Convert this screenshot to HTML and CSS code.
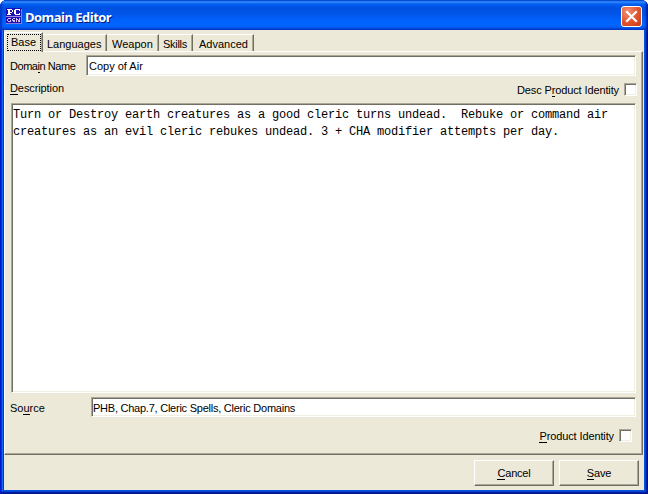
FILE: index.html
```html
<!DOCTYPE html>
<html lang="en">
<head>
<meta charset="utf-8">
<title>Domain Editor</title>
<link rel="stylesheet" href="styles.css">
</head>
<body>
<div class="window">
  <header class="titlebar">
    <svg class="app-icon" viewBox="0 0 16 16" shape-rendering="crispEdges">
      <rect width="16" height="16" fill="#1c12b4"/>
      <path d="M0 15.500H15.500V1" fill="none" stroke="#8c7ad8"/>
      <path d="M1 1.500H6M2 1V7M3 1V7M6.500 2V4M3 4.500H6M1 6.500H5M9 1.500H14M13.500 1V3M8.500 2V6M9.500 2V6M9 6.500H14M13.500 5V6" fill="none" stroke="#fff"/>
      <path d="M0 8.500H15" stroke="#a48be8"/>
      <path d="M2 10.500H5M1.500 11V13M2 13.500H5M4.500 12V13M7 10.500H9M6.500 11V13M7 12.500H9M7 13.500H9M10.500 10V14M11.500 11V12M12.500 12V14M13.500 10V14" fill="none" stroke="#d9bdf5"/>
    </svg>
    <h1 class="title">Domain Editor</h1>
    <button class="close" aria-label="Close">
      <svg viewBox="0 0 19 19"><path d="M5 5L14 14M14 5L5 14" stroke="#fff" stroke-width="2.200" stroke-linecap="square"/></svg>
    </button>
  </header>
  <main class="content">
    <nav class="tabs">
      <span class="tab active"><span class="focus">Base</span></span>
      <span class="tab languages">Languages</span>
      <span class="tab weapon">Weapon</span>
      <span class="tab skills">Skills</span>
      <span class="tab advanced">Advanced</span>
    </nav>
    <section class="panel">
      <div class="row name-row"><label>Doma<i class="key">i</i>n Name</label><div class="field">Copy of Air</div></div>
      <div class="row desc-row"><label><i class="key">D</i>escription</label><span class="check-label">Desc P<i class="key">r</i>oduct Identity</span><span class="checkbox"></span></div>
      <div class="field description">Turn or Destroy earth creatures as a good cleric turns undead.  Rebuke or command air
creatures as an evil cleric rebukes undead. 3 + CHA modifier attempts per day.</div>
      <div class="row source-row"><label>So<i class="key">u</i>rce</label><div class="field">PHB, Chap.7, Cleric Spells, Cleric Domains</div></div>
      <div class="row identity-row"><span class="check-label"><i class="key">P</i>roduct Identity</span><span class="checkbox"></span></div>
    </section>
    <footer class="actions">
      <button class="button"><span><i class="key">C</i>ancel</span></button>
      <button class="button"><span><i class="key">S</i>ave</span></button>
    </footer>
  </main>
</div>
</body>
</html>
```
FILE: styles.css
```css
* { box-sizing: border-box; }
body { margin: 0; background: #fff; font: 11px/13px "Liberation Sans", Arial, sans-serif; color: #000; }
.window {
  width: 648px; height: 494px; padding: 0 4px 4px; display: flex; flex-direction: column;
  border-radius: 7px 7px 0 0; background: #0831d9; overflow: hidden;
  box-shadow: inset 1px 0 #0019cf, inset -1px -1px #00138c, inset -2px -2px #001ea0, inset 2px 0 #0831d9, inset -3px -3px #0441d8, inset 3px 0 #166aee, inset -4px -4px #0855dd;
}
.titlebar {
  flex: none; height: 30px; margin: 0 -4px; padding: 2px 6px 0; display: flex; align-items: center;
  background: linear-gradient(#0058e6 0, #3c94ff 2px, #1370f5 3px, #0058ee 5px, #0050e0 8px, #0055e8 14px, #0061fc 20px, #0066ff 25px, #005cf5 27px, #0048d8 29px, #003dd7 30px);
  box-shadow: inset 2px 0 2px #0037c8, inset -2px 0 2px #001e9c;
}
.app-icon { width: 16px; height: 16px; }
.title { flex: 1; margin: 1px 0 0 3px; font: bold 13px/18px "Open Sans", "Liberation Sans", sans-serif; letter-spacing: -0.55px; color: #fff; text-shadow: 1px 1px #0a1883; }
.close {
  width: 21px; height: 21px; padding: 0; border: 1px solid #fff; border-radius: 3px;
  background: radial-gradient(circle at 30% 25%, #ee9075, #e1532c 55%, #c73a12);
}
.close svg { display: block; width: 19px; height: 19px; }
.content { flex: 1; display: flex; flex-direction: column; background: #ece9d8; }
.tabs { height: 21px; display: flex; align-items: flex-end; }
.tab {
  height: 17px; padding: 3px 0 0 5px; white-space: nowrap; border: solid;
  border-width: 1px 1px 0 0; border-color: #fff #716f64 #fff #fff;
  box-shadow: inset -1px 0 #aca899; border-top-left-radius: 2px;
}
.active {
  position: relative; z-index: 1; width: 39px; height: 20px; padding: 1px 0 0 2px; margin: 0 -1px -1px 0;
  background: #ece9d8; border-left-width: 1px;
}
.focus { display: block; width: 34px; height: 17px; padding: 1px 0 0 3px; border: 1px dotted #000; }
.languages { width: 65px; }
.weapon { width: 52px; }
.skills { width: 34px; padding-left: 4px; letter-spacing: -0.3px; }
.advanced { width: 61px; padding-left: 6px; }
.panel {
  height: 404px; padding: 3px 6px 0; margin-right: 1px; border: 1px solid;
  border-color: #fff #716f64 #716f64 #fff; box-shadow: inset -1px -1px #aca899;
}
.row { display: flex; }
.row label { margin-left: -1px; white-space: nowrap; }
.key { font-style: normal; display: inline-block; height: 13px; border-bottom: 1px solid #000; vertical-align: top; }
.field {
  height: 21px; padding: 4px 2px; background: #fff; white-space: pre; border: 1px solid;
  border-color: #aca899 #fff #fff #aca899; box-shadow: inset 1px 1px #716f64, inset -1px -1px #f1efe2;
}
.row .field { flex: 1; }
.name-row { height: 21px; }
.name-row label { width: 76px; padding-top: 5px; letter-spacing: -0.45px; }
.desc-row { height: 27px; padding-top: 7px; }
.desc-row label { flex: 1; margin-top: -1px; letter-spacing: -0.1px; }
.check-label { padding-top: 1px; white-space: nowrap; letter-spacing: -0.12px; }
.checkbox {
  width: 13px; height: 13px; margin: 0 -1px 0 5px; background: #fff; border: 1px solid;
  border-color: #aca899 #fff #fff #aca899; box-shadow: inset 1px 1px #716f64, inset -1px -1px #f1efe2;
}
.description { height: 290px; padding: 3px 1px; font: 12px/17px "Liberation Mono", "Courier New", monospace; letter-spacing: -0.2px; }
.source-row { height: 20px; margin-top: 4px; }
.source-row label { width: 81px; padding-top: 5px; }
.source-row .field { height: 20px; padding-left: 1px; letter-spacing: -0.24px; }
.identity-row { margin-top: 12px; justify-content: flex-end; padding-right: 5px; }
.actions { flex: 1; display: flex; justify-content: flex-end; gap: 5px; padding: 5px 5px 0 0; }
.button {
  width: 80px; height: 26px; padding: 1px 0 0; color: #000; background: #ece9d8; font: inherit; border: 1px solid;
  letter-spacing: -0.2px; border-color: #fff #716f64 #716f64 #fff; box-shadow: inset -1px -1px #aca899;
}
```
